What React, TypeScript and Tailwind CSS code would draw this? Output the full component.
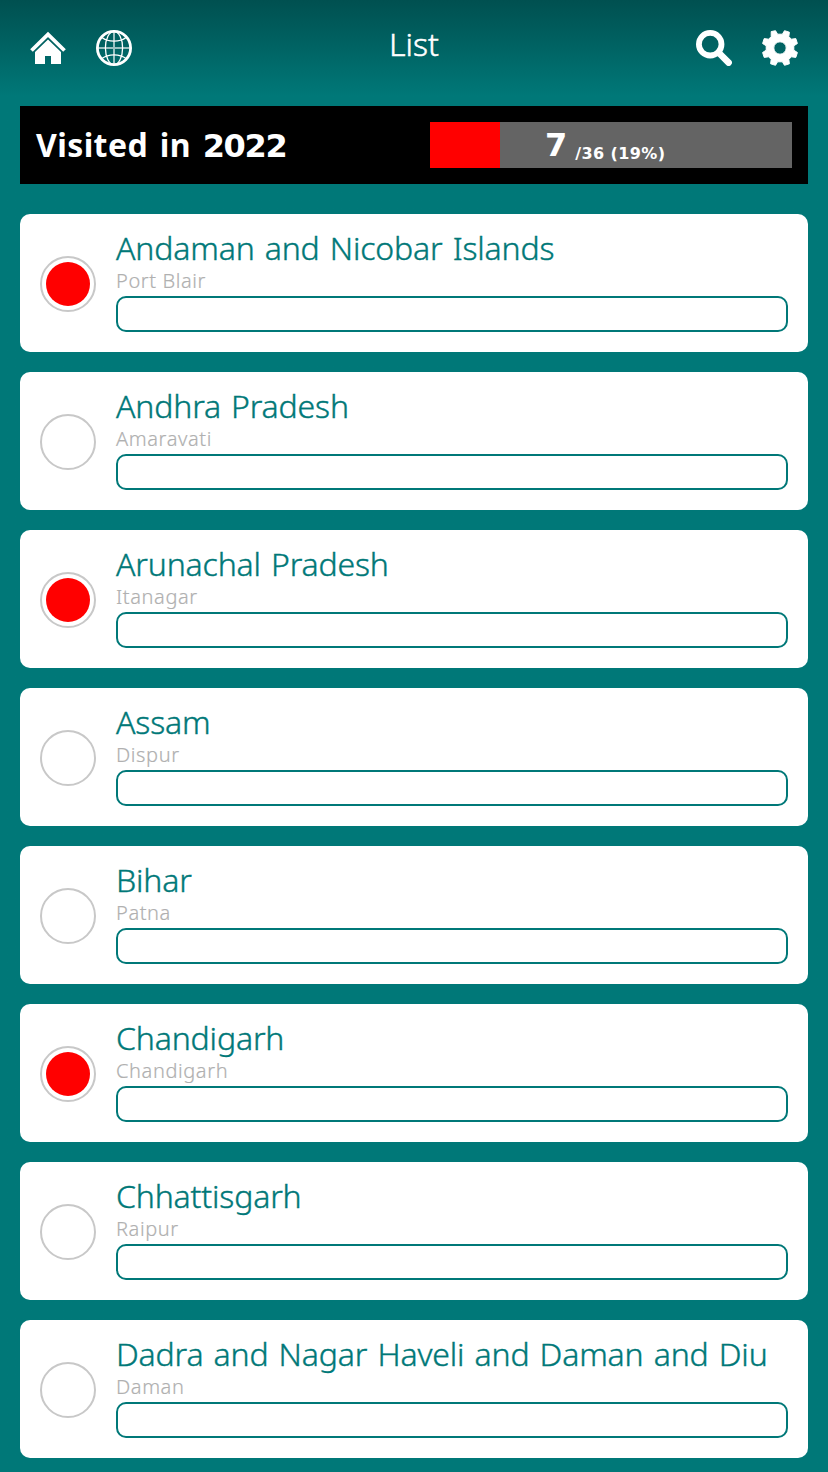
import React from 'react';

type Place = {
  name: string;
  capital: string;
  visited?: boolean;
};

const places: Place[] = [
  { name: 'Andaman and Nicobar Islands', capital: 'Port Blair', visited: true },
  { name: 'Andhra Pradesh', capital: 'Amaravati' },
  { name: 'Arunachal Pradesh', capital: 'Itanagar', visited: true },
  { name: 'Assam', capital: 'Dispur' },
  { name: 'Bihar', capital: 'Patna' },
  { name: 'Chandigarh', capital: 'Chandigarh', visited: true },
  { name: 'Chhattisgarh', capital: 'Raipur' },
  { name: 'Dadra and Nagar Haveli and Daman and Diu', capital: 'Daman' },
];

const YEAR = 2022;
const TOTAL = 36;
const VISITED = 7;

function HomeIcon() {
  return (
    <svg viewBox="0 0 36 36" className="size-9">
      <path d="M1.5 20.5 18 4.5 34.5 20.5" fill="none" stroke="#fff" strokeWidth="3.8" />
      <path d="M18 9.5 31 22V34H21V26H15V34H5V22Z" fill="#fff" />
    </svg>
  );
}

function GlobeIcon() {
  return (
    <svg viewBox="0 0 36 36" className="size-9" fill="none" stroke="#fff">
      <circle cx="18" cy="18" r="16.6" strokeWidth="2.8" />
      <ellipse cx="18" cy="18" rx="8.6" ry="16.6" strokeWidth="1.3" />
      <path d="M6 7.5C12 12.4 24 12.4 30 7.5M6 28.5C12 23.6 24 23.6 30 28.5" strokeWidth="1.3" />
      <path d="M18 1V35M1 18H35" strokeWidth="2" strokeOpacity="0.6" />
    </svg>
  );
}

function SearchIcon() {
  return (
    <svg viewBox="0 0 36 36" className="size-9" fill="none" stroke="#fff">
      <circle cx="14.2" cy="14.2" r="11.3" strokeWidth="5.8" />
      <path d="M22.5 22.5 32.6 32.6" strokeWidth="6.6" strokeLinecap="round" />
    </svg>
  );
}

function GearIcon() {
  return (
    <svg viewBox="-18 -18 36 36" className="size-9" fill="#fff">
      <path
        fillRule="evenodd"
        stroke="#fff"
        strokeLinejoin="round"
        d="M-8.8 -16.4 -4.5 -17.3 -2.4 -13.8H2.4L4.5 -17.3 9.4 -15.8 8.8 -11.4 11.4 -8.8 15.8 -9.4 17.4 -4.5 13.8 -2.2V2.2L17.4 4.5 15.8 9.4 11.4 8.8 8.8 11.4 9.4 15.8 4.5 17.3 2.4 13.8H-2.4L-4.5 17.3 -9.4 15.8 -8.8 11.4 -11.4 8.8 -15.8 9.4 -17.4 4.5 -13.8 2.2V-2.2L-17.4 -4.5 -15.8 -9.4 -11.4 -8.8 -8.8 -11.4ZM0 -6.2A6.2 6.2 0 1 0 0 6.2 6.2 6.2 0 1 0 0 -6.2Z"
      />
    </svg>
  );
}

function Header() {
  return (
    <header className="flex h-24 items-center justify-between px-[30px] text-white">
      <div className="flex w-[120px] gap-[30px]">
        <HomeIcon />
        <GlobeIcon />
      </div>
      <h1 className="pb-2 text-[32px] leading-8 font-light [-webkit-text-stroke:0.5px]">List</h1>
      <div className="flex w-[120px] justify-end gap-[30px]">
        <SearchIcon />
        <GearIcon />
      </div>
    </header>
  );
}

function Summary() {
  const percent = Math.round((VISITED / TOTAL) * 100);
  return (
    <section className="mx-5 mt-2.5 flex h-[78px] items-center justify-between bg-black px-4 font-bold text-white">
      <h2 className="text-[32px] leading-[46px] tracking-[0.4px] [word-spacing:3px]">
        Visited in <span className="font-['DejaVu_Sans',sans-serif] tracking-[-1.3px]">{YEAR}</span>
      </h2>
      <div className="grid h-[46px] w-[362px] bg-[#646464] font-['DejaVu_Sans',sans-serif]">
        <div
          className="col-start-1 row-start-1 bg-[red]"
          style={{ width: `${(VISITED / TOTAL) * 100}%` }}
        />
        <div className="col-start-1 row-start-1 flex items-end gap-2 pl-[115px]">
          <span className="text-[32px] leading-[46px]">{VISITED}</span>
          <span className="pb-0.5 text-base leading-6 tracking-[0.4px]">{`/${TOTAL} (${percent}%)`}</span>
        </div>
      </div>
    </section>
  );
}

function PlaceCard({ place }: { place: Place }) {
  return (
    <li className="flex h-[138px] items-center gap-5 rounded-[10px] bg-white px-5">
      <div className="mt-0.5 flex size-14 shrink-0 items-center justify-center rounded-full border-2 border-[#c8c8c8]">
        {place.visited && <div className="size-11 rounded-full bg-[red]" />}
      </div>
      <div className="flex min-w-0 flex-1 flex-col">
        <h3 className="mb-2 text-[32px] leading-7 font-light tracking-[-0.16px] [word-spacing:2px] whitespace-nowrap text-[#007878] [-webkit-text-stroke:0.4px]">
          {place.name}
        </h3>
        <p className="mb-1 text-xl leading-[22px] font-light tracking-[0.6px] text-[#b0b0b0] [-webkit-text-stroke:0.2px]">
          {place.capital}
        </p>
        <input className="h-9 rounded-[10px] border-2 border-[#007878] px-2 outline-none" />
      </div>
    </li>
  );
}

export default function App() {
  return (
    <div className="h-[1472px] overflow-hidden bg-[#007878] bg-linear-to-b from-[#005050] from-0% to-[#007878] to-[96px] font-['Noto_Sans',sans-serif]">
      <Header />
      <Summary />
      <ul className="mt-[30px] flex flex-col gap-5 px-5">
        {places.map((place) => (
          <PlaceCard key={place.name} place={place} />
        ))}
      </ul>
    </div>
  );
}
